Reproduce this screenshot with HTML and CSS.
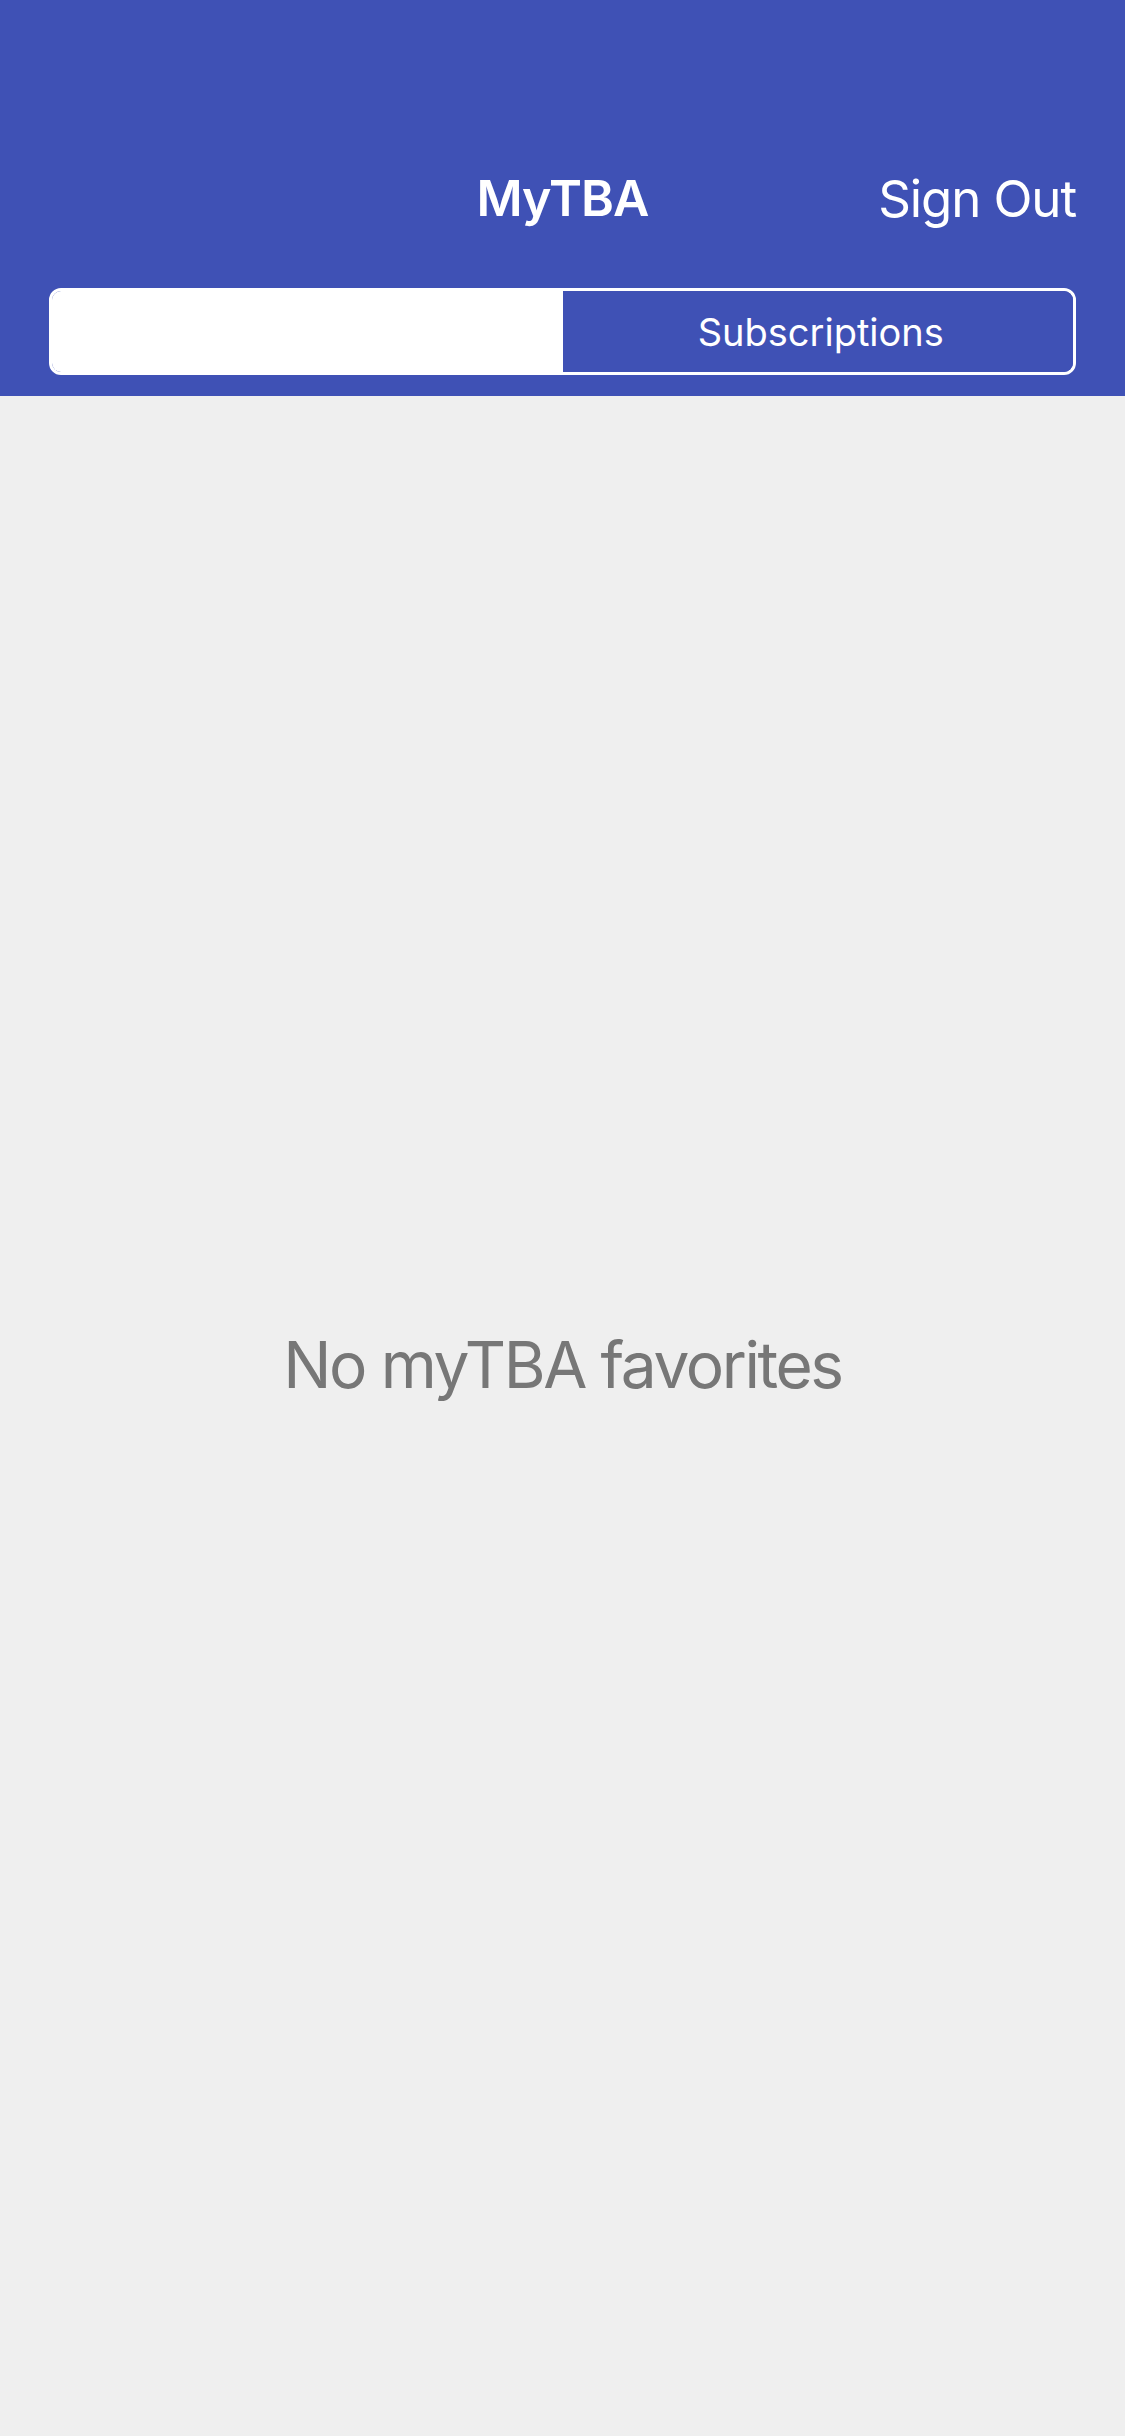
FILE: index.html
```html
<!DOCTYPE html>
<html>
<head>
<meta charset="utf-8">
<link rel="stylesheet" href="styles.css">
</head>
<body>
<div class="screen">
  <header class="header">
    <div class="status"></div>
    <div class="navbar">
      <span class="nav-spacer"></span>
      <span class="nav-title">MyTBA</span>
      <span class="nav-action">Sign Out</span>
    </div>
    <div class="segment-row">
      <div class="segment">
        <div class="seg seg-selected"></div>
        <div class="seg seg-other"><span class="seg-label">Subscriptions</span></div>
      </div>
    </div>
  </header>
  <main class="content">
    <p class="empty">No myTBA favorites</p>
  </main>
</div>
</body>
</html>
```

FILE: styles.css
```css
html, body {
  margin: 0;
  padding: 0;
}
body {
  font-family: Inter, "Noto Sans", "Liberation Sans", sans-serif;
  background: #efefef;
}
.screen {
  width: 1125px;
  height: 2436px;
  display: flex;
  flex-direction: column;
  overflow: hidden;
}
.header {
  background: #3f51b5;
  color: #ffffff;
}
.status {
  height: 132px;
}
.navbar {
  height: 132px;
  display: grid;
  grid-template-columns: 1fr auto 1fr;
  align-items: center;
  padding: 0 49px;
}
.nav-title {
  font-size: 50px;
  font-weight: 600;
  letter-spacing: -0.9px;
}
.nav-action {
  justify-self: end;
  font-size: 51px;
  font-weight: 400;
  letter-spacing: -1.1px;
}
.segment-row {
  padding: 24px 49px 21px 49px;
}
.segment {
  display: flex;
  height: 87px;
  border: 3px solid #ffffff;
  border-radius: 12px;
  overflow: hidden;
  box-sizing: border-box;
}
.seg {
  flex: 1 1 0;
  display: flex;
  align-items: center;
  justify-content: center;
  font-size: 38px;
  font-weight: 400;
}
.seg-selected {
  background: #ffffff;
}
.seg-other {
  background: #3f51b5;
  color: #ffffff;
}
.seg-label {
  margin-left: 6px;
}
.content {
  flex: 1;
  display: flex;
  justify-content: center;
  padding-top: 930px;
}
.empty {
  margin: 0;
  font-size: 64px;
  line-height: 77px;
  color: #777777;
  height: 77px;
  letter-spacing: -2.4px;
}
```
